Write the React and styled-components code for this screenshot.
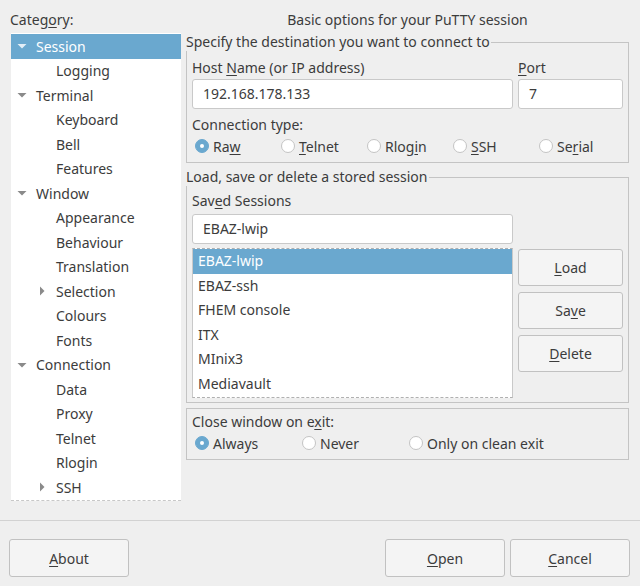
import React from "react";
import styled, { createGlobalStyle } from "styled-components";

const GlobalStyle = createGlobalStyle`
  html, body {
    margin: 0;
    padding: 0;
    background: #efefef;
  }
  body {
    font-family: "Noto Sans", "Open Sans", sans-serif;
    font-size: 14px;
    color: #3c3c3c;
  }
`;

const Window = styled.div`
  width: 640px;
  height: 586px;
  display: flex;
  flex-direction: column;
  box-sizing: border-box;
`;

const Main = styled.div`
  display: grid;
  grid-template-columns: 171px 1fr;
  column-gap: 5px;
  padding: 9px 11px 0 10px;
  height: 499px;
  box-sizing: border-box;
`;

const LeftCol = styled.div`
  display: flex;
  flex-direction: column;
`;

const RightCol = styled.div`
  display: flex;
  flex-direction: column;
`;

const Heading = styled.div`
  height: 24px;
  line-height: 22px;
  text-align: ${(p) => (p.$center ? "center" : "left")};
  white-space: nowrap;
`;

const Tree = styled.div`
  flex: 1;
  margin-left: 1px;
  background: #fff;
  border-bottom: 1px dashed #c8c8c8;
  padding-top: 1px;
  overflow: hidden;
`;

const TreeRow = styled.div`
  height: 24.5px;
  display: flex;
  align-items: center;
  padding-left: ${(p) => p.$level * 20}px;
  background: ${(p) => (p.$selected ? "#6aa8cf" : "transparent")};
  color: ${(p) => (p.$selected ? "#fff" : "#3c3c3c")};
  white-space: nowrap;
`;

const Expander = styled.span`
  width: 19px;
  padding-left: 6px;
  display: inline-flex;
  align-items: center;
  flex-shrink: 0;
`;

const Mnemonic = styled.u`
  text-decoration-thickness: 1px;
  text-underline-offset: 2px;
`;

const Group = styled.fieldset`
  margin: 0 0 ${(p) => p.$gap || 0}px 0;
  border: 1px solid #c4c4c4;
  padding: ${(p) => p.$pt}px 5px ${(p) => p.$pb}px 5px;
  min-width: 0;
  display: flex;
  flex-direction: column;
`;

const Legend = styled.legend`
  padding: 0;
  margin-left: -6px;
  padding-right: 1px;
  line-height: 18px;
  background: #efefef;
`;

const FieldLabel = styled.div`
  height: ${(p) => p.$h || 23}px;
  line-height: ${(p) => p.$h || 23}px;
  margin-top: ${(p) => p.$mt || 0}px;
  white-space: nowrap;
`;

const Row = styled.div`
  display: grid;
  grid-template-columns: 1fr 105px;
  column-gap: 5px;
  margin-top: ${(p) => p.$mt || 0}px;
`;

const TextInput = styled.div`
  height: 30px;
  box-sizing: border-box;
  border: 1px solid #c9c9c9;
  border-radius: 3px;
  background: #fff;
  padding: 0 10px;
  line-height: 28px;
`;

const RadioRow = styled.div`
  display: grid;
  grid-template-columns: repeat(${(p) => p.$cols}, ${(p) => p.$width}px);
  height: 22px;
  align-items: center;
`;

const RadioItem = styled.label`
  display: flex;
  align-items: center;
  gap: 4px;
  padding-left: 3px;
  white-space: nowrap;
`;

const RadioDot = styled.span`
  width: 14px;
  height: 14px;
  box-sizing: border-box;
  border-radius: 50%;
  flex-shrink: 0;
  display: flex;
  align-items: center;
  justify-content: center;
  background: ${(p) => (p.$on ? "#6aa8cf" : "#fff")};
  border: 1px solid ${(p) => (p.$on ? "#6aa8cf" : "#c4c4c4")};
  &::after {
    content: "";
    width: 4px;
    height: 4px;
    border-radius: 50%;
    background: #fff;
    display: ${(p) => (p.$on ? "block" : "none")};
  }
`;

const SessionsArea = styled.div`
  display: grid;
  grid-template-columns: 1fr 105px;
  column-gap: 5px;
  margin-top: 4px;
`;

const List = styled.div`
  height: 150px;
  box-sizing: border-box;
  background: #fff;
  border: 1px solid #c9c9c9;
  border-top: 1px dashed #b0b0b0;
  border-bottom: 1px dashed #b0b0b0;
  overflow: hidden;
`;

const ListRow = styled.div`
  height: 24.5px;
  line-height: 24.5px;
  padding-left: 5px;
  background: ${(p) => (p.$selected ? "#6aa8cf" : "transparent")};
  color: ${(p) => (p.$selected ? "#fff" : "#3c3c3c")};
  white-space: nowrap;
`;

const ButtonColumn = styled.div`
  display: flex;
  flex-direction: column;
  gap: 6px;
  padding-top: 1px;
`;

const Button = styled.button`
  font: inherit;
  color: #3c3c3c;
  height: ${(p) => p.$h || 37}px;
  width: ${(p) => (p.$w ? p.$w + "px" : "100%")};
  background: #f4f4f4;
  border: 1px solid #c1c1c1;
  border-radius: 3px;
  padding: 0;
`;

const Separator = styled.div`
  height: 1px;
  background: #d2d2d2;
  margin-top: 21px;
`;

const Footer = styled.div`
  display: flex;
  align-items: center;
  padding: 18px 10px 0 9px;
  gap: 5px;
`;

const Spacer = styled.div`
  flex: 1;
`;

const Triangle = ({ open, color }) => (
  <svg width="10" height="10" viewBox="0 0 10 10">
    {open ? (
      <path d="M0.5 3 L9.5 3 L5 7.5 Z" fill={color} />
    ) : (
      <path d="M3 0.5 L7.5 5 L3 9.5 Z" fill={color} />
    )}
  </svg>
);

const treeItems = [
  { label: "Session", level: 0, open: true, selected: true },
  { label: "Logging", level: 1 },
  { label: "Terminal", level: 0, open: true },
  { label: "Keyboard", level: 1 },
  { label: "Bell", level: 1 },
  { label: "Features", level: 1 },
  { label: "Window", level: 0, open: true },
  { label: "Appearance", level: 1 },
  { label: "Behaviour", level: 1 },
  { label: "Translation", level: 1 },
  { label: "Selection", level: 1, open: false },
  { label: "Colours", level: 1 },
  { label: "Fonts", level: 1 },
  { label: "Connection", level: 0, open: true },
  { label: "Data", level: 1 },
  { label: "Proxy", level: 1 },
  { label: "Telnet", level: 1 },
  { label: "Rlogin", level: 1 },
  { label: "SSH", level: 1, open: false },
];

const sessions = ["EBAZ-lwip", "EBAZ-ssh", "FHEM console", "ITX", "MInix3", "Mediavault"];

// label with one underlined mnemonic letter at index i
const M = ({ text, i }) => (
  <>
    {text.slice(0, i)}
    <Mnemonic>{text[i]}</Mnemonic>
    {text.slice(i + 1)}
  </>
);

const Radio = ({ on, children }) => (
  <RadioItem>
    <RadioDot $on={on} />
    <span>{children}</span>
  </RadioItem>
);

export default function App() {
  return (
    <Window>
      <GlobalStyle />
      <Main>
        <LeftCol>
          <Heading>
            <M text="Category:" i={5} />
          </Heading>
          <Tree>
            {treeItems.map((t) => (
              <TreeRow key={t.label} $level={t.level} $selected={t.selected}>
                <Expander>
                  {t.open !== undefined && (
                    <Triangle open={t.open} color={t.selected ? "#e3eef7" : "#8a8a8a"} />
                  )}
                </Expander>
                <span>{t.label}</span>
              </TreeRow>
            ))}
          </Tree>
        </LeftCol>
        <RightCol>
          <Heading $center>Basic options for your PuTTY session</Heading>
          <Group $pt={5} $pb={5} $gap={5}>
            <Legend>Specify the destination you want to connect to</Legend>
            <Row>
              <FieldLabel>
                Host <M text="Name" i={0} /> (or IP address)
              </FieldLabel>
              <FieldLabel>
                <M text="Port" i={0} />
              </FieldLabel>
              <TextInput>192.168.178.133</TextInput>
              <TextInput>7</TextInput>
            </Row>
            <FieldLabel $mt={6} $h={20}>
              Connection type:
            </FieldLabel>
            <RadioRow $cols={5} $width={86}>
              <Radio on>
                <M text="Raw" i={2} />
              </Radio>
              <Radio>
                <M text="Telnet" i={0} />
              </Radio>
              <Radio>
                <M text="Rlogin" i={4} />
              </Radio>
              <Radio>
                <M text="SSH" i={0} />
              </Radio>
              <Radio>
                <M text="Serial" i={2} />
              </Radio>
            </RadioRow>
          </Group>
          <Group $pt={3} $pb={4} $gap={5}>
            <Legend>Load, save or delete a stored session</Legend>
            <FieldLabel>
              <M text="Saved Sessions" i={3} />
            </FieldLabel>
            <Row $mt={2}>
              <TextInput>EBAZ-lwip</TextInput>
            </Row>
            <SessionsArea>
              <List>
                {sessions.map((s, i) => (
                  <ListRow key={s} $selected={i === 0}>
                    {s}
                  </ListRow>
                ))}
              </List>
              <ButtonColumn>
                <Button $h={37}>
                  <M text="Load" i={0} />
                </Button>
                <Button $h={37}>
                  <M text="Save" i={2} />
                </Button>
                <Button $h={37}>
                  <M text="Delete" i={0} />
                </Button>
              </ButtonColumn>
            </SessionsArea>
          </Group>
          <Group $pt={2} $pb={5}>
            <FieldLabel $h={21}>
              Close window on e<Mnemonic>x</Mnemonic>it:
            </FieldLabel>
            <RadioRow $cols={3} $width={107}>
              <Radio on>Always</Radio>
              <Radio>Never</Radio>
              <Radio>Only on clean exit</Radio>
            </RadioRow>
          </Group>
        </RightCol>
      </Main>
      <Separator />
      <Footer>
        <Button $w={120} $h={38}>
          <M text="About" i={0} />
        </Button>
        <Spacer />
        <Button $w={120} $h={38}>
          <M text="Open" i={0} />
        </Button>
        <Button $w={120} $h={38}>
          <M text="Cancel" i={0} />
        </Button>
      </Footer>
    </Window>
  );
}
